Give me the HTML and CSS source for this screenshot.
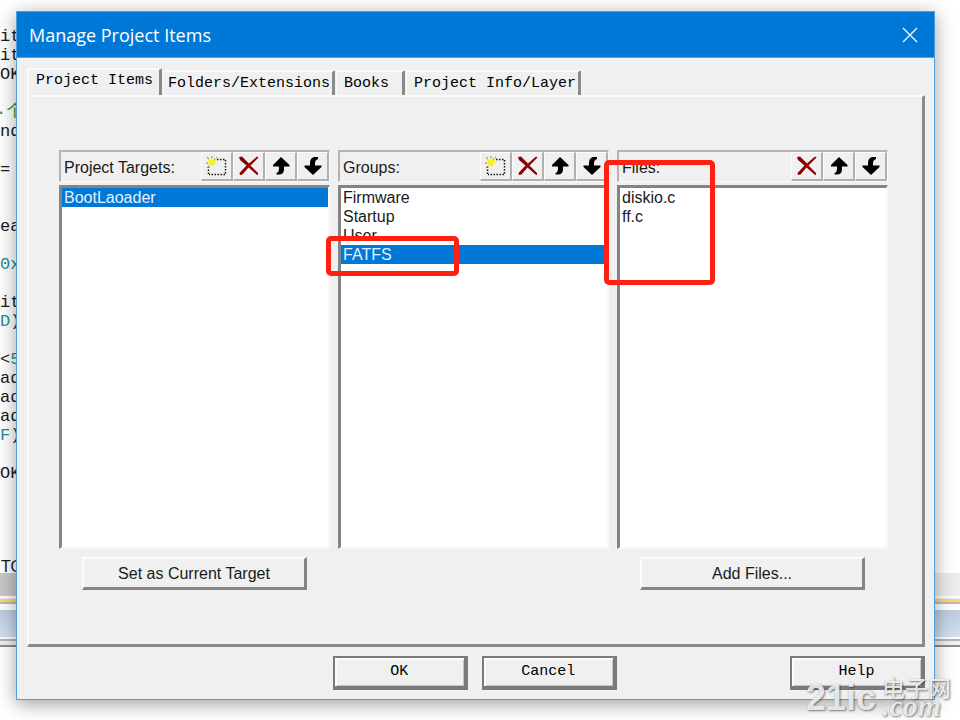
FILE: index.html
```html
<!DOCTYPE html>
<html lang="en">
<head>
<meta charset="utf-8">
<title>Manage Project Items</title>
<link rel="stylesheet" href="styles.css">
</head>
<body>
<svg class="sprite" aria-hidden="true">
  <symbol id="new" viewBox="0 0 22 20">
    <path d="M8 3.500H20M19.500 4V18M19 18.500H3M2.500 18V9" fill="none" stroke="#111" stroke-width="1.500" stroke-dasharray="1.500 1.500"/>
    <path d="M6 1l1 3 4-2-2 4 3 1-4 1 0 3-3-2-3 3 1-4-3-1 3-1-2-4 4 2z" fill="#f5ee2a"/>
    <path d="M1 1l2 2M6 0v2M11 1l-1 1M0 7h2M1 12l2-2" stroke="#8a8a50" stroke-width="1"/>
  </symbol>
  <symbol id="del" viewBox="0 0 22 20">
    <path d="M1 1L4 0.500 11 7.500 19 0.500 20.500 1.500 12.500 9.500 20 17 20 19 18.500 18.500 10.500 11.500 4.500 18.500 2 19 1.500 17 8.500 9.500 2 4z" fill="#8b0000"/>
  </symbol>
  <symbol id="up" viewBox="0 0 22 20">
    <path d="M11 1L19.500 9V10.500H14V14Q13.500 18 10 18.500H6.500V17Q9 16 9 13V10.500H3V9z" fill="#000"/>
  </symbol>
  <symbol id="down" viewBox="0 0 22 20">
    <path d="M11 19L2.500 11V9.500H8V6Q8.500 2 12 1H16V3Q13 4 13 7V9.500H19.500V11z" fill="#000"/>
  </symbol>
</svg>
<div class="desktop">
  <div class="backdrop" aria-hidden="true">
    <pre class="code">it
it
OK

<i>·个</i>
nd

=


ea

<b>0x</b>

it
<b>D</b>)

&lt;<b>5</b>
ad
ad
ad
<b>F</b>)

OK</pre>
    <div class="output">TO</div>
    <div class="bar-scroll"></div>
    <div class="bar-yellow"></div>
    <div class="bar-blue"></div>
    <div class="bar-edge"></div>
  </div>

  <main class="dialog">
    <header class="titlebar">
      <h1>Manage Project Items</h1>
      <button class="close" aria-label="Close"><svg viewBox="0 0 16 16"><path d="M1 1L15 15M15 1L1 15"/></svg></button>
    </header>
    <div class="content">
      <nav class="tabs" role="tablist">
        <button class="tab active" role="tab" aria-selected="true">Project Items</button>
        <button class="tab" role="tab">Folders/Extensions</button>
        <button class="tab books" role="tab">Books</button>
        <button class="tab info" role="tab">Project Info/Layer</button>
      </nav>
      <div class="panel">
        <section class="column">
          <div class="toolbar">
            <label for="targets">Project Targets:</label>
            <button aria-label="New target"><svg><use href="#new"/></svg></button>
            <button aria-label="Delete target"><svg><use href="#del"/></svg></button>
            <button aria-label="Move target up"><svg><use href="#up"/></svg></button>
            <button aria-label="Move target down"><svg><use href="#down"/></svg></button>
          </div>
          <select id="targets" size="10">
            <option selected>BootLaoader</option>
          </select>
          <button class="wide">Set as Current Target</button>
        </section>
        <section class="column">
          <div class="toolbar">
            <label for="groups">Groups:</label>
            <button aria-label="New group"><svg><use href="#new"/></svg></button>
            <button aria-label="Delete group"><svg><use href="#del"/></svg></button>
            <button aria-label="Move group up"><svg><use href="#up"/></svg></button>
            <button aria-label="Move group down"><svg><use href="#down"/></svg></button>
          </div>
          <select id="groups" size="10">
            <option>Firmware</option>
            <option>Startup</option>
            <option>User</option>
            <option selected>FATFS</option>
          </select>
          <div class="mark mark-group"></div>
        </section>
        <section class="column">
          <div class="toolbar">
            <label for="files">Files:</label>
            <button aria-label="Delete file"><svg><use href="#del"/></svg></button>
            <button aria-label="Move file up"><svg><use href="#up"/></svg></button>
            <button aria-label="Move file down"><svg><use href="#down"/></svg></button>
          </div>
          <select id="files" size="10">
            <option>diskio.c</option>
            <option>ff.c</option>
          </select>
          <button class="wide">Add Files...</button>
          <div class="mark mark-files"></div>
        </section>
      </div>
      <footer class="actions">
        <button>OK</button>
        <button>Cancel</button>
        <button>Help</button>
      </footer>
    </div>
  </main>
  <div class="watermark">
    <span class="wm-name">21ic</span>
    <span class="wm-side"><span class="wm-cn">电子网</span><span class="wm-com">.com</span></span>
  </div>
</div>
</body>
</html>
```

FILE: styles.css
```css
* { box-sizing: border-box; }

body { margin: 0; background: #fff; color: #1a1a1a; }

button { font: inherit; color: inherit; padding: 0; }

.sprite { position: absolute; width: 0; height: 0; }

.desktop {
  position: relative;
  display: flex;
  min-height: 100vh;
  padding: 11px 25px 20px 16px;
  overflow: hidden;
}

/* Editor window behind the dialog */
.backdrop { position: absolute; inset: 0; }
.code {
  margin: 0;
  padding-top: 27px;
  height: 558px;
  font: 17px/19px "Liberation Mono", "Noto Sans CJK SC", monospace;
}
.code i { font-style: normal; color: #2b9a2b; margin-left: -4px; }
.code b { font-weight: normal; color: #1e9090; }
.output { height: 15px; padding-left: 1px; font: 16px/18px "Liberation Sans", sans-serif; }
.bar-scroll { height: 23px; background: linear-gradient(90deg, #c8c8c8 50%, #ececec 50%); }
.bar-yellow { height: 6px; margin-top: 2px; background: #fcd56c; border-top: 1px solid #eee; border-bottom: 2px solid #c0bcb0; }
.bar-blue { height: 27px; margin-top: 6px; background: linear-gradient(#bccbdd, #d3e0f0); }
.bar-edge { height: 8px; margin-top: 2px; background: #f0f0f0; border-top: 2px solid #b4b4b4; border-bottom: 2px solid #8c8c8c; }

/* Dialog frame */
.dialog {
  position: relative;
  flex: 1;
  display: flex;
  flex-direction: column;
  background: #f0f0f0;
  border: 1px solid #4f9fdf;
  box-shadow: 0 4px 18px rgba(0, 0, 0, .38);
}
.titlebar {
  display: flex;
  align-items: center;
  justify-content: space-between;
  height: 46px;
  padding: 0 16px 0 12px;
  background: #0078d7;
  border-bottom: 1px solid #4fa3e6;
  color: #fff;
}
.titlebar h1 { margin: 0; font: 18px/24px "Open Sans", sans-serif; }
.close { width: 16px; height: 16px; border: 0; background: none; }
.close svg { display: block; width: 16px; height: 16px; fill: none; stroke: #fff; stroke-width: 1.2; }
.content {
  flex: 1;
  display: flex;
  flex-direction: column;
  padding: 10px 9px 9px 10px;
  font: 15px/20px "Liberation Mono", monospace;
}

/* Tabs */
.tabs { display: flex; align-items: flex-end; gap: 1px; }
.tab {
  height: 25px;
  padding: 0 2px 0 4px;
  background: #f0f0f0;
  border: solid;
  border-width: 2px 3px 0 1px;
  border-color: #fafafa #8a8a8a #fafafa #fafafa;
  border-radius: 3px 2px 0 0;
  color: #000;
}
.tab.active { height: 27px; padding: 0 6px 4px 7px; border-left-width: 2px; }
.tab.books { padding-left: 7px; padding-right: 13px; }
.tab.info { padding-left: 7px; }

.panel {
  flex: 1;
  display: grid;
  grid-template-columns: repeat(3, minmax(0, 1fr));
  gap: 8px;
  padding: 53px 34px 54px 30px;
  border: solid;
  border-width: 2px 3px 3px 2px;
  border-color: #fafafa #8a8a8a #8a8a8a #fafafa;
  font: 16px/19px "Liberation Sans", Arial, sans-serif;
}
.column { position: relative; display: flex; flex-direction: column; }
.toolbar {
  display: flex;
  align-items: stretch;
  height: 32px;
  margin-bottom: 3px;
  border: solid;
  border-width: 2px 1px 1px 2px;
  border-color: #b4b4b4 #fafafa #fafafa #b4b4b4;
}
.toolbar label { flex: 1; padding-left: 3px; line-height: 32px; }
.toolbar button {
  display: grid;
  place-items: center;
  width: 32px;
  background: #f0f0f0;
  border: solid;
  border-width: 1px 2px 2px 1px;
  border-color: #fcfcfc #b0b0b0 #b0b0b0 #fcfcfc;
}
.toolbar svg { width: 22px; height: 20px; }

select {
  flex: 1;
  width: 100%;
  min-height: 200px;
  padding: 0;
  background: #fff;
  border: solid;
  border-width: 3px 2px 2px 3px;
  border-color: #848484 #f8f8f8 #f8f8f8 #848484;
  border-radius: 0;
  font: inherit;
  color: #1a1a1a;
  overflow: hidden;
  outline: 0;
}
option { height: 19px; min-height: 19px; padding: 1px 2px 0; line-height: 19px; }
option:checked {
  background: linear-gradient(#0078d7, #0078d7);
  color: #fff;
  -webkit-text-fill-color: #e4f2ff;
}

.wide {
  height: 33px;
  margin: 8px 23px 0;
  background: #f0f0f0;
  border: solid;
  border-width: 2px 3px 3px 2px;
  border-color: #fcfcfc #858585 #858585 #fcfcfc;
}
.column:nth-child(2) { padding-bottom: 41px; }

/* Red highlight boxes over the lists */
.mark { position: absolute; border: 5px solid #ff2012; border-radius: 5px; }
.mark-group { left: -12px; top: 86px; width: 133px; height: 40px; }
.mark-files { left: -13px; top: 10px; width: 111px; height: 125px; }

.actions { display: flex; gap: 14px; padding-top: 9px; }
.actions::before { content: ""; width: 32.5%; }
.actions button {
  width: 135px;
  height: 34px;
  background: #f0f0f0;
  border: solid #7a7a7a;
  border-width: 2px 4px 4px 2px;
  box-shadow: inset 2px 2px #fcfcfc, inset -1px -1px #c4c4c4;
  color: #000;
}
.actions button:last-child { margin-left: auto; }

.watermark {
  position: absolute;
  right: 9px;
  bottom: 5px;
  display: flex;
  align-items: flex-end;
  gap: 6px;
  color: rgba(255, 255, 255, .85);
  text-shadow: 1px 1px 2px rgba(0, 0, 0, .45), 0 0 1px rgba(0, 0, 0, .3);
  pointer-events: none;
}
.wm-name { font: bold 36px/34px "Liberation Sans Narrow", "Liberation Sans", sans-serif; }
.wm-side { display: flex; flex-direction: column; }
.wm-cn { font: 500 23px/20px "Noto Sans CJK SC", sans-serif; }
.wm-com { font: italic bold 30px/18px "Liberation Serif", serif; }
```
